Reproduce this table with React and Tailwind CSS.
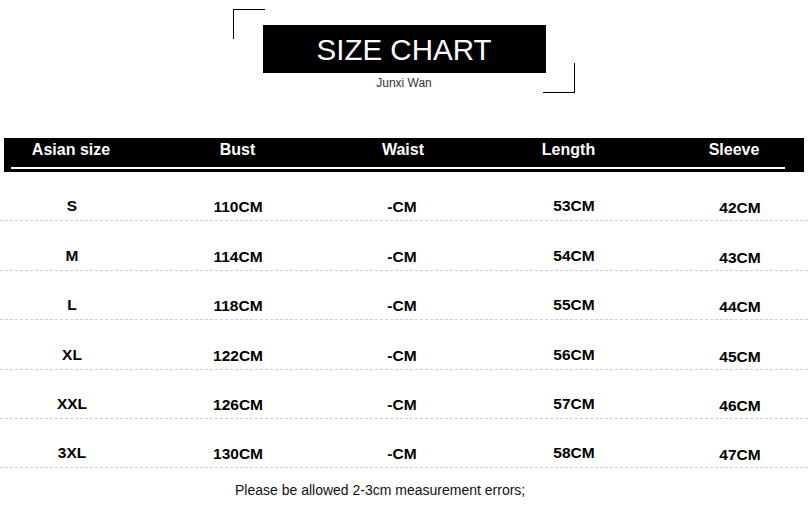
const rows = [
  ["S", "110CM", "-CM", "53CM", "42CM"],
  ["M", "114CM", "-CM", "54CM", "43CM"],
  ["L", "118CM", "-CM", "55CM", "44CM"],
  ["XL", "122CM", "-CM", "56CM", "45CM"],
  ["XXL", "126CM", "-CM", "57CM", "46CM"],
  ["3XL", "130CM", "-CM", "58CM", "47CM"],
];

const headers = ["Asian size", "Bust", "Waist", "Length", "Sleeve"];

// small vertical nudges seen in the picture, per column
const nudge = ["", "translate-y-[1px]", "translate-y-[1px]", "", "translate-y-[2px]"];

export default function App() {
  return (
    <div className="w-[808px] h-[507px] bg-white overflow-hidden font-['Liberation_Sans',Arial,sans-serif] text-black">
      {/* TITLE */}
      <div className="relative w-[283px] mx-auto pt-[25px]">
        <div className="absolute left-[-30px] top-[9px] w-[32px] h-[30px] border-l border-t border-black" />
        <div className="absolute right-[-29px] top-[63px] w-[32px] h-[30px] border-r border-b border-black" />
        <div className="h-[48px] bg-black flex items-center justify-center">
          <span className="text-white text-[29.5px] leading-none translate-y-[1px]">SIZE CHART</span>
        </div>
        <div className="mt-[3px] text-center text-[12px] leading-[14px] text-[#333]">Junxi Wan</div>
      </div>

      {/* HEADER BAR */}
      <div className="mx-[4px] mt-[48px] h-[34px] bg-black relative">
        <div className="grid grid-cols-[134px_199px_132px_199px_132px] h-[23px] items-center pt-[1px]">
          {headers.map((h) => (
            <div key={h} className="text-center text-white font-bold text-[16px] leading-[18px]">
              {h}
            </div>
          ))}
        </div>
        <div className="absolute left-[7px] w-[774px] top-[29px] h-[1.5px] bg-white" />
      </div>

      {/* ROWS */}
      <div>
        {rows.map((r) => (
          <div
            key={r[0]}
            className="h-[49.4px] border-b border-dashed border-[#cfcfcf] grid grid-cols-[144px_188px_140px_204px_128px] items-end pb-[5px]"
          >
            {r.map((v, i) => (
              <div key={i} className={`text-center font-bold text-[15.5px] leading-[18px] ${nudge[i]}`}>
                {v}
              </div>
            ))}
          </div>
        ))}
      </div>

      <div className="mt-[14px] ml-[235px] text-[14px] leading-[16px] text-[#111]">
        Please be allowed 2-3cm measurement errors;
      </div>
    </div>
  );
}
